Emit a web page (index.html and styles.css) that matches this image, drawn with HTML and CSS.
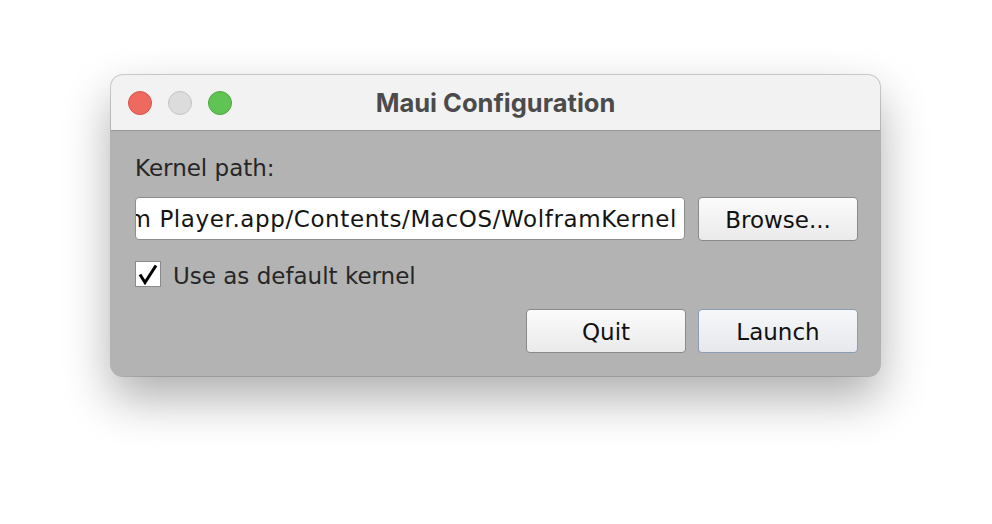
FILE: index.html
```html
<!DOCTYPE html>
<html>
<head>
<meta charset="utf-8">
<link rel="stylesheet" href="styles.css">
</head>
<body>
<div class="window">
  <div class="titlebar">
    <div class="lights">
      <span class="light red"></span>
      <span class="light gray"></span>
      <span class="light green"></span>
    </div>
    <div class="title">Maui Configuration</div>
  </div>
  <div class="content">
    <div class="label">Kernel path:</div>
    <div class="path-row">
      <div class="input"><span class="input-text">/Applications/Wolfram Player.app/Contents/MacOS/WolframKernel</span></div>
      <div class="button">Browse...</div>
    </div>
    <div class="check-row">
      <span class="checkbox">
        <svg width="26" height="26" viewBox="0 0 26 26"><path d="M5 13.5 L10 21.5 L21 4.5" fill="none" stroke="#000" stroke-width="3" stroke-linejoin="miter" stroke-linecap="butt"/></svg>
      </span>
      <span class="check-label">Use as default kernel</span>
    </div>
    <div class="actions">
      <div class="button">Quit</div>
      <div class="button default">Launch</div>
    </div>
  </div>
</div>
</body>
</html>
```

FILE: styles.css
```css
html, body {
  margin: 0;
  padding: 0;
  background: #ffffff;
}
body {
  width: 992px;
  height: 524px;
  padding: 75px 0 0 111px;
  box-sizing: border-box;
  overflow: hidden;
  font-family: "DejaVu Sans", "Noto Sans", sans-serif;
}
.window {
  width: 769px;
  height: 301px;
  border-radius: 12px;
  overflow: hidden;
  background: #b3b3b3;
  box-shadow: 0 0 0 1px rgba(0,0,0,0.18), 0 22px 48px rgba(0,0,0,0.32);
  display: flex;
  flex-direction: column;
}
.titlebar {
  height: 55px;
  flex: none;
  background: #f2f2f2;
  border-bottom: 1px solid #989898;
  display: flex;
  align-items: center;
  position: relative;
}
.lights {
  display: flex;
  gap: 16px;
  padding-left: 17px;
  padding-top: 1px;
}
.light {
  width: 22px;
  height: 22px;
  border-radius: 50%;
  border: 1px solid;
}
.red { background: #ee6a5e; border-color: #d65248; }
.gray { background: #dcdcdc; border-color: #c4c4c4; }
.green { background: #5fc453; border-color: #4ba83f; }
.title {
  position: absolute;
  left: 0;
  right: 0;
  top: 0;
  bottom: 0;
  display: flex;
  align-items: center;
  justify-content: center;
  font-family: Inter, "Noto Sans", sans-serif;
  font-weight: 700;
  font-size: 25.5px;
  color: #4b4b4b;
  padding-top: 0;
  pointer-events: none;
}
.content {
  padding: 24px 22px 0 24px;
  display: flex;
  flex-direction: column;
  color: #1e1e1e;
  font-size: 23px;
}
.label {
  height: 26px;
  line-height: 26px;
  color: #262626;
}
.path-row {
  margin-top: 16px;
  display: flex;
  align-items: flex-start;
  gap: 13px;
}
.input {
  height: 41px;
  background: #ffffff;
  border: 1px solid #8d8d8d;
  border-radius: 4px;
  display: flex;
  justify-content: flex-end;
  align-items: center;
  overflow: hidden;
  padding-right: 7px;
  box-sizing: content-box;
  flex: none;
  width: 541px;
}
.input-text {
  white-space: nowrap;
  color: #141414;
  letter-spacing: 0.6px;
}
.button {
  width: 158px;
  height: 42px;
  border: 1px solid #8a8a8a;
  border-radius: 4px;
  background: linear-gradient(#fbfbfb, #eaeaea);
  display: flex;
  align-items: center;
  justify-content: center;
  color: #111;
  flex: none;
  padding-top: 2px;
  box-sizing: border-box;
  height: 44px;
  width: 160px;
}
.button.default {
  border-color: #8a9db4;
  background: linear-gradient(#f6f7f9, #e6e8ec);
}
.check-row {
  margin-top: 20px;
  display: flex;
  align-items: center;
  gap: 12px;
  height: 26px;
}
.checkbox {
  width: 24px;
  height: 24px;
  background: #fff;
  border: 1px solid #8a8a8a;
  display: block;
}
.checkbox svg {
  display: block;
  margin: -1px 0 0 -1px;
}
.check-label {
  color: #262626;
  padding-top: 3px;
}
.actions {
  margin-top: 22px;
  display: flex;
  justify-content: flex-end;
  gap: 12px;
}
```
